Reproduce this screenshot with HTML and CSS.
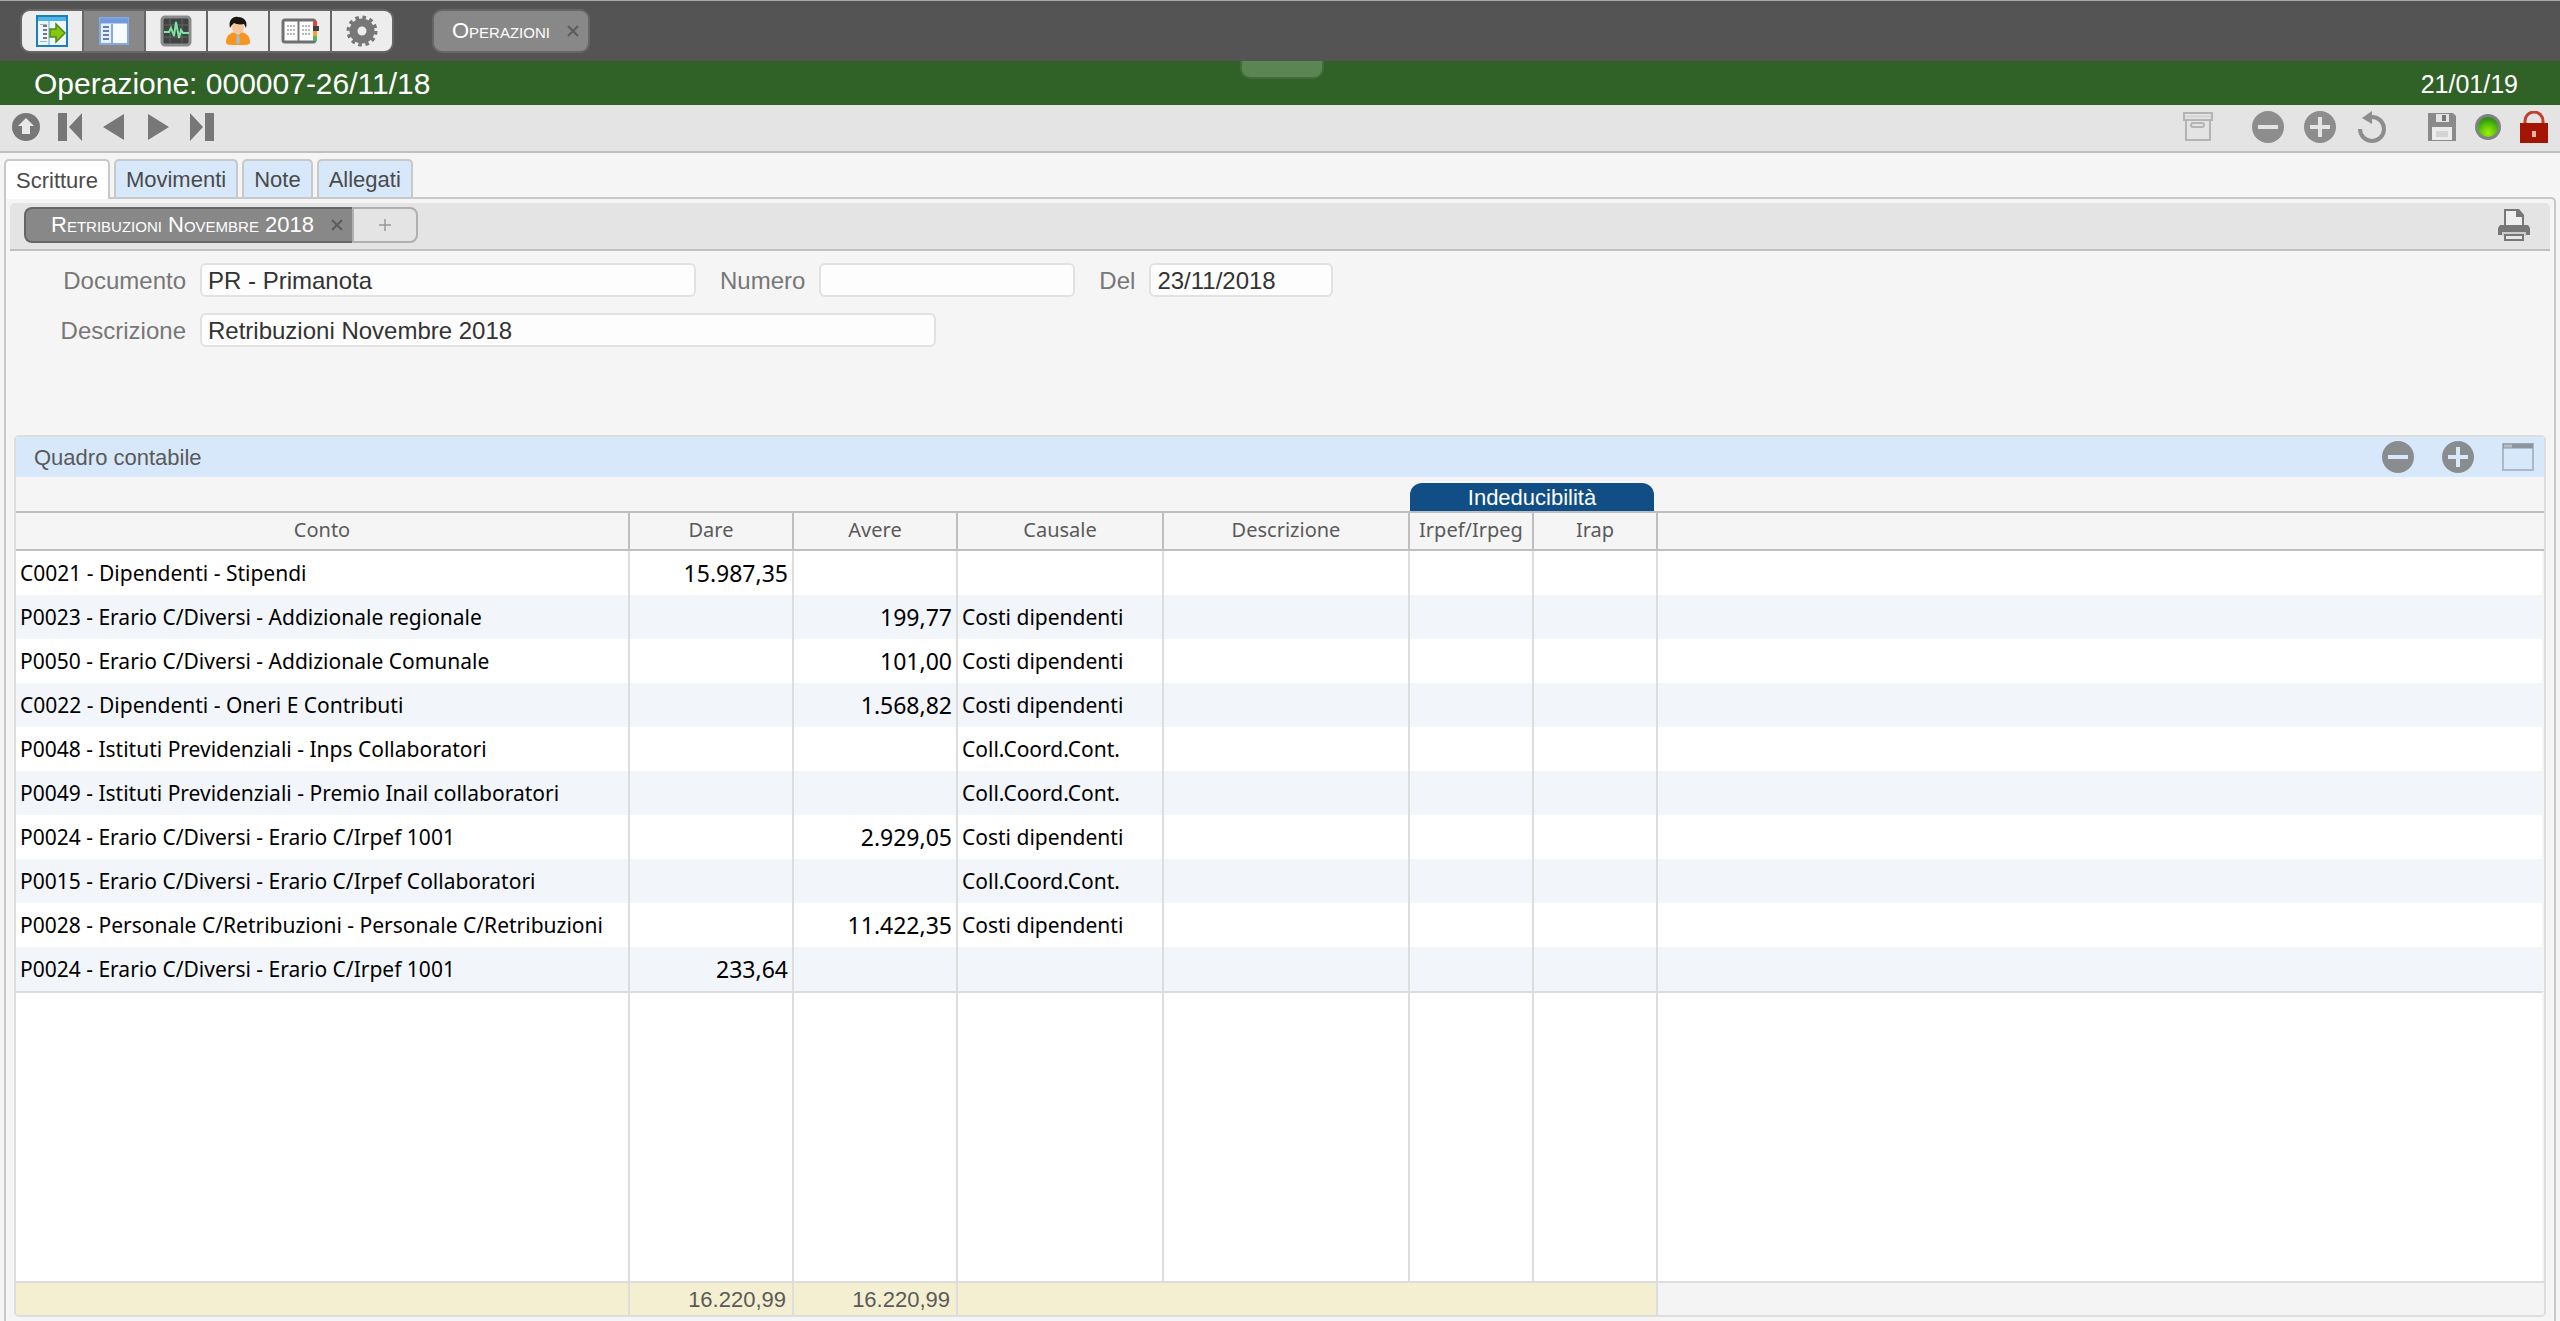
FILE: index.html
```html
<!DOCTYPE html>
<html lang="it">
<head>
  <meta charset="UTF-8">
  <meta name="viewport" content="width=device-width, initial-scale=1.0">
  <title>Operazioni</title>
  <link rel="stylesheet" href="styles.css">
</head>
<body>
  <header class="topbar">
    <div class="apps">
      <button class="app" aria-label="Apri">
        <svg width="32" height="32" viewBox="0 0 32 32">
          <rect x="1" y="1" width="30" height="30" fill="#eef6fb" stroke="#1b7fb8" stroke-width="2"/>
          <path d="M2 4h28" stroke="#4fb4e6" stroke-width="4"/>
          <path d="M13 6v24" stroke="#5bb3de" stroke-width="1"/>
          <path d="M4 9.500h7M4 26.500h7" stroke="#9fb6c4" stroke-width="1"/>
          <path d="M7 11h4M7 15h4M7 19h4M7 23h4" stroke="#777" stroke-width="2"/>
          <path d="M14 14h6V9l9 9-9 9v-5h-6z" fill="#86c716" stroke="#4f8a10" stroke-width="1.500"/>
        </svg>
      </button>
      <button class="app active" aria-label="Elenco">
        <svg width="30" height="28" viewBox="0 0 30 28">
          <rect x="1" y="1" width="28" height="26" fill="#f7faff" stroke="#86a9e0" stroke-width="2"/>
          <path d="M1 4h28" stroke="#6f9ade" stroke-width="5"/>
          <rect x="2" y="7" width="10" height="19" fill="#e6effc"/>
          <path d="M4 10h6M4 14h6M4 18h6M4 22h6" stroke="#5f7fb8" stroke-width="2"/>
          <path d="M13 7v19" stroke="#86a9e0" stroke-width="2"/>
        </svg>
      </button>
      <button class="app" aria-label="Monitor">
        <svg width="32" height="32" viewBox="0 0 32 32">
          <rect x="2" y="2" width="28" height="28" rx="3" fill="#3f4442" stroke="#8b8b8b" stroke-width="3"/>
          <path d="M4 10h24M4 22h24M10 4v24M22 4v24" stroke="#5f6864" stroke-width="1"/>
          <path d="M4 17h5l2-4 3 8 2-14 3 16 2-8 2 3h6" fill="none" stroke="#7ee2a0" stroke-width="2"/>
        </svg>
      </button>
      <button class="app" aria-label="Utente">
        <svg width="28" height="30" viewBox="0 0 28 30">
          <path d="M2 26c0-7 5-10 12-10s12 3 12 10c0 3-3 3-12 3s-12 0-12-3z" fill="#f9941e"/>
          <path d="M11 16h6l-3 4z" fill="#fff"/>
          <path d="M13 18h2l1 8-2 3-2-3z" fill="#a9bccb"/>
          <ellipse cx="14" cy="11" rx="6" ry="7" fill="#f6c79b"/>
          <path d="M6 12C4 4 9 0 14 1c6 0 10 4 8 11l-2-4c-4 1-8 0-10-1l-2 2z" fill="#1b1512"/>
        </svg>
      </button>
      <button class="app" aria-label="Rubrica">
        <svg width="38" height="26" viewBox="0 0 38 26">
          <rect x="2" y="2" width="32" height="22" rx="2" fill="#fcfcfc" stroke="#707070" stroke-width="3"/>
          <path d="M17.500 3v20" stroke="#777" stroke-width="2"/>
          <path d="M6 8h8M6 12h8M6 16h8M21 8h8M21 12h8M21 16h8" stroke="#b8b8b8" stroke-width="2" stroke-dasharray="2 1"/>
          <path d="M32 3h4v5h-4z" fill="#e2453c"/>
          <path d="M32 8h6v5h-6z" fill="#3f3f3f"/>
          <path d="M32 13h4v5h-4z" fill="#f0a43a"/>
          <path d="M32 18h4v5h-4z" fill="#57b365"/>
        </svg>
      </button>
      <button class="app" aria-label="Impostazioni">
        <svg width="32" height="32" viewBox="0 0 32 32">
          <circle cx="16" cy="16" r="8.500" fill="none" stroke="#777" stroke-width="8"/>
          <circle cx="16" cy="16" r="13.500" fill="none" stroke="#777" stroke-width="4" stroke-dasharray="3.534 3.534"/>
        </svg>
      </button>
    </div>
    <div class="task">
      <span>Operazioni</span>
      <button class="close" aria-label="Chiudi">
        <svg width="14" height="14" viewBox="0 0 14 14"><path d="M2 2l10 10M12 2L2 12" stroke="#5c5c5c" stroke-width="2"/></svg>
      </button>
    </div>
  </header>

  <div class="titlebar">
    <h1>Operazione: 000007-26/11/18</h1>
    <span class="date">21/01/19</span>
    <div class="handle"></div>
  </div>

  <div class="toolbar">
    <div class="nav">
      <button aria-label="Su">
        <svg width="30" height="30" viewBox="0 0 30 30"><circle cx="15" cy="15" r="14" fill="#777"/><path d="M15 6l8 8h-4v8h-8v-8H7z" fill="#e8e8e8"/></svg>
      </button>
      <button aria-label="Primo">
        <svg width="26" height="28" viewBox="0 0 26 28"><path d="M1 0h9v28H1zM25 0v28L12 14z" fill="#777"/></svg>
      </button>
      <button aria-label="Precedente">
        <svg width="22" height="28" viewBox="0 0 22 28"><path d="M21 1v26L0 14z" fill="#777"/></svg>
      </button>
      <button aria-label="Successivo">
        <svg width="22" height="28" viewBox="0 0 22 28"><path d="M1 1v26l21-13z" fill="#777"/></svg>
      </button>
      <button aria-label="Ultimo">
        <svg width="26" height="28" viewBox="0 0 26 28"><path d="M16 0h9v28h-9zM1 0v28l13-14z" fill="#777"/></svg>
      </button>
    </div>
    <div class="actions">
      <div class="group">
        <button aria-label="Archivia">
          <svg width="30" height="30" viewBox="0 0 30 30" fill="none" stroke="#b4b4b4" stroke-width="2"><path d="M1 1h28v7H1zM3 8v20h24V8"/><path d="M2 4.500h26" stroke="#d4d4d4"/><rect x="8" y="11" width="13" height="4" rx="2"/></svg>
        </button>
      </div>
      <div class="group wide">
        <button aria-label="Rimuovi">
          <svg width="32" height="32" viewBox="0 0 32 32"><circle cx="16" cy="16" r="16" fill="#8d8d8d"/><path d="M6 16h20" stroke="#e4e4e4" stroke-width="4"/></svg>
        </button>
        <button aria-label="Aggiungi">
          <svg width="32" height="32" viewBox="0 0 32 32"><circle cx="16" cy="16" r="16" fill="#8d8d8d"/><path d="M6 16h20M16 6v20" stroke="#e4e4e4" stroke-width="4"/></svg>
        </button>
        <button aria-label="Annulla">
          <svg width="32" height="32" viewBox="0 0 32 32"><path d="M4 18a12 12 0 1 0 12-12" fill="none" stroke="#8d8d8d" stroke-width="4"/><path d="M16 0v13L6 7z" fill="#8d8d8d"/></svg>
        </button>
      </div>
      <div class="group">
        <button aria-label="Salva">
          <svg width="28" height="28" viewBox="0 0 28 28"><path d="M0 0h25l3 3v25H0z" fill="#8a8a8a"/><path d="M8 1h13v8H8z" fill="#e4e4e4"/><path d="M14 2h4v6h-4z" fill="#777"/><path d="M4 14h20v13H4z" fill="#ececec"/><path d="M8 18h12v6H8z" fill="#d4d4d4"/></svg>
        </button>
        <button aria-label="Stato">
          <svg width="28" height="28" viewBox="0 0 28 28">
            <defs><radialGradient id="led" cx="50%" cy="80%" r="75%"><stop offset="0" stop-color="#a4f000"/><stop offset="0.500" stop-color="#5fc80a"/><stop offset="1" stop-color="#2f8d16"/></radialGradient></defs>
            <circle cx="14" cy="14" r="13" fill="#7f837f"/><circle cx="14" cy="14" r="10" fill="url(#led)"/>
          </svg>
        </button>
        <button aria-label="Blocca">
          <svg width="28" height="32" viewBox="0 0 28 32"><path d="M5 13v-3a9 9 0 0 1 18 0v3" fill="none" stroke="#c2402f" stroke-width="3"/><path d="M0 12h28v20H0z" fill="#a31500"/><path d="M12 20h4v6h-4z" fill="#e6b3aa"/></svg>
        </button>
      </div>
    </div>
  </div>

  <nav class="tabs">
    <button class="tab active">Scritture</button>
    <button class="tab">Movimenti</button>
    <button class="tab">Note</button>
    <button class="tab">Allegati</button>
  </nav>

  <main class="panel">
    <div class="subbar">
      <div class="subtab">
        <span>Retribuzioni Novembre 2018</span>
        <button class="close" aria-label="Chiudi">
          <svg width="14" height="14" viewBox="0 0 14 14"><path d="M2 2l10 10M12 2L2 12" stroke="#5c5c5c" stroke-width="2"/></svg>
        </button>
      </div>
      <button class="add" aria-label="Nuova scrittura">
        <svg width="12" height="12" viewBox="0 0 12 12"><path d="M0 6h12M6 0v12" stroke="#999" stroke-width="1.500"/></svg>
      </button>
      <button class="print" aria-label="Stampa">
        <svg width="32" height="32" viewBox="0 0 32 32">
          <path d="M7 17V1h13l5 6v10" fill="#eee" stroke="#777" stroke-width="2"/>
          <path d="M18 0h3l5 6v2h-8z" fill="#777"/>
          <path d="M2 16h28l2 3v7h-4l-2-3H6l-2 3H0v-7z" fill="#777"/>
          <path d="M4 23h24v4H4z" fill="#ccc"/>
          <path d="M7 26h18v5H7z" fill="#e8e8e8" stroke="#777" stroke-width="2"/>
        </svg>
      </button>
    </div>

    <form class="fields">
      <div class="row">
        <label class="first" for="documento">Documento</label>
        <input class="w-doc" type="text" id="documento" value="PR - Primanota">
        <label for="numero">Numero</label>
        <input class="w-num" type="text" id="numero">
        <label for="del">Del</label>
        <input class="w-date" type="text" id="del" value="23/11/2018">
      </div>
      <div class="row">
        <label class="first" for="descrizione">Descrizione</label>
        <input class="w-desc" type="text" id="descrizione" value="Retribuzioni Novembre 2018">
      </div>
    </form>

    <section class="box">
      <div class="box-head">
        <h2>Quadro contabile</h2>
        <button aria-label="Rimuovi riga">
          <svg width="32" height="32" viewBox="0 0 32 32"><circle cx="16" cy="16" r="16" fill="#8a8d90"/><path d="M6 16h20" stroke="#d7e8fa" stroke-width="4"/></svg>
        </button>
        <button aria-label="Aggiungi riga">
          <svg width="32" height="32" viewBox="0 0 32 32"><circle cx="16" cy="16" r="16" fill="#8a8d90"/><path d="M6 16h20M16 6v20" stroke="#d7e8fa" stroke-width="4"/></svg>
        </button>
        <button aria-label="Ingrandisci">
          <svg width="32" height="28" viewBox="0 0 32 28"><rect x="1" y="1" width="30" height="26" fill="none" stroke="#abb8c6" stroke-width="2"/><path d="M1 3h30" stroke="#8d959e" stroke-width="5"/><path d="M2 3h8" stroke="#b4bfcb" stroke-width="3"/></svg>
        </button>
      </div>
      <div class="grid">
        <table>
          <colgroup>
            <col class="c-conto"><col class="c-amount"><col class="c-amount"><col class="c-causale"><col class="c-descr"><col class="c-tax"><col class="c-tax"><col>
          </colgroup>
          <thead>
            <tr class="groups">
              <th colspan="5"></th>
              <th colspan="2"><div class="pill">Indeducibilità</div></th>
              <th></th>
            </tr>
            <tr class="heads">
              <th>Conto</th><th>Dare</th><th>Avere</th><th>Causale</th><th>Descrizione</th><th>Irpef/Irpeg</th><th>Irap</th><th></th>
            </tr>
          </thead>
          <tbody>
            <tr><td>C0021 - Dipendenti - Stipendi</td><td class="num">15.987,35</td><td class="num"></td><td></td><td></td><td></td><td></td><td></td></tr>
            <tr><td>P0023 - Erario C/Diversi - Addizionale regionale</td><td class="num"></td><td class="num">199,77</td><td>Costi dipendenti</td><td></td><td></td><td></td><td></td></tr>
            <tr><td>P0050 - Erario C/Diversi - Addizionale Comunale</td><td class="num"></td><td class="num">101,00</td><td>Costi dipendenti</td><td></td><td></td><td></td><td></td></tr>
            <tr><td>C0022 - Dipendenti - Oneri E Contributi</td><td class="num"></td><td class="num">1.568,82</td><td>Costi dipendenti</td><td></td><td></td><td></td><td></td></tr>
            <tr><td>P0048 - Istituti Previdenziali - Inps Collaboratori</td><td class="num"></td><td class="num"></td><td>Coll.Coord.Cont.</td><td></td><td></td><td></td><td></td></tr>
            <tr><td>P0049 - Istituti Previdenziali - Premio Inail collaboratori</td><td class="num"></td><td class="num"></td><td>Coll.Coord.Cont.</td><td></td><td></td><td></td><td></td></tr>
            <tr><td>P0024 - Erario C/Diversi - Erario C/Irpef 1001</td><td class="num"></td><td class="num">2.929,05</td><td>Costi dipendenti</td><td></td><td></td><td></td><td></td></tr>
            <tr><td>P0015 - Erario C/Diversi - Erario C/Irpef Collaboratori</td><td class="num"></td><td class="num"></td><td>Coll.Coord.Cont.</td><td></td><td></td><td></td><td></td></tr>
            <tr><td>P0028 - Personale C/Retribuzioni - Personale C/Retribuzioni</td><td class="num"></td><td class="num">11.422,35</td><td>Costi dipendenti</td><td></td><td></td><td></td><td></td></tr>
            <tr><td>P0024 - Erario C/Diversi - Erario C/Irpef 1001</td><td class="num">233,64</td><td class="num"></td><td></td><td></td><td></td><td></td><td></td></tr>
            <tr class="filler"><td></td><td></td><td></td><td></td><td></td><td></td><td></td><td></td></tr>
          </tbody>
          <tfoot>
            <tr><td></td><td>16.220,99</td><td>16.220,99</td><td colspan="4"></td><td class="rest"></td></tr>
          </tfoot>
        </table>
      </div>
    </section>
  </main>
</body>
</html>
```
FILE: styles.css
```css
* {
  box-sizing: border-box;
}
body {
  margin: 0;
  height: 100vh;
  display: flex;
  flex-direction: column;
  overflow: hidden;
  background-color: #f5f5f5;
  color: #4a4a4a;
  font-family: "Liberation Sans", Arial, sans-serif;
  font-size: 22px;
}
button {
  margin: 0;
  padding: 0;
  border: none;
  background: none;
  font: inherit;
  color: inherit;
  cursor: pointer;
}
svg {
  display: block;
}

/* top bar */
.topbar {
  display: flex;
  align-items: center;
  gap: 38px;
  height: 61px;
  padding: 0 20px;
  background-color: #545454;
  border-top: 1px solid #a8aaa8;
}
.apps {
  display: flex;
  gap: 2px;
  padding: 2px;
  background-color: #666;
  border-radius: 10px;
  overflow: hidden;
}
.app {
  display: flex;
  align-items: center;
  justify-content: center;
  width: 60px;
  height: 40px;
  background-color: #ededed;
}
.app.active {
  background-color: #888;
}
.app:first-child {
  border-radius: 8px 0 0 8px;
}
.app:last-child {
  border-radius: 0 8px 8px 0;
}
.task, .subtab {
  display: flex;
  align-items: center;
  gap: 16px;
  background-color: #888;
  color: white;
  font-variant: small-caps;
}
.task {
  height: 44px;
  padding: 0 8px 0 18px;
  border: 2px solid #666;
  border-radius: 10px;
}

/* title */
.titlebar {
  position: relative;
  display: flex;
  align-items: center;
  justify-content: space-between;
  height: 44px;
  padding: 2px 42px 0 34px;
  background-color: #306227;
  color: white;
}
.titlebar h1 {
  margin: 0;
  font-size: 30px;
  font-weight: normal;
}
.date {
  font-size: 25px;
}
.handle {
  position: absolute;
  top: 0;
  left: 50%;
  width: 84px;
  height: 18px;
  margin-left: -40px;
  background-color: #5b8553;
  border: 2px solid #3f6c39;
  border-top: none;
  border-radius: 0 0 10px 10px;
}

/* toolbar */
.toolbar {
  display: flex;
  justify-content: space-between;
  height: 48px;
  padding: 0 10px 2px 4px;
  background-color: #e4e4e4;
  border-bottom: 2px solid #c0c0c0;
}
.nav, .actions, .group {
  display: flex;
  align-items: center;
}
.nav button, .group button {
  display: flex;
  justify-content: center;
  width: 44px;
}
.actions {
  gap: 38px;
}
.group {
  gap: 14px;
}
.group.wide {
  gap: 20px;
}
.group button {
  width: 32px;
}

/* tabs */
.tabs {
  display: flex;
  gap: 4px;
  padding: 6px 4px 0;
}
.tab {
  height: 38px;
  padding: 2px 10px 0;
  background-color: #d7e8fa;
  border: 2px solid #c8c8c8;
  border-bottom: none;
  border-radius: 5px 5px 0 0;
}
.tab.active {
  position: relative;
  height: 40px;
  margin-bottom: -2px;
  background-color: white;
}
.panel {
  flex: 1;
  display: flex;
  flex-direction: column;
  margin: 0 4px;
  padding: 4px;
  border: 2px solid #c8c8c8;
  border-bottom: none;
  border-top-right-radius: 5px;
}
.subbar {
  display: flex;
  align-items: center;
  height: 48px;
  padding: 0 20px 2px 14px;
  background-color: #e4e4e4;
  border-bottom: 2px solid #c0c0c0;
  border-radius: 5px 5px 0 0;
}
.subtab {
  height: 36px;
  padding: 0 8px 0 25px;
  border: 2px solid #666;
  border-right: none;
  border-radius: 8px 0 0 8px;
}
.add {
  display: flex;
  align-items: center;
  justify-content: center;
  width: 66px;
  height: 36px;
  border: 2px solid #b0b0b0;
  border-radius: 0 8px 8px 0;
}
.print {
  margin-left: auto;
}

/* fields */
.fields {
  display: flex;
  flex-direction: column;
  gap: 16px;
  margin: 12px 0 88px;
  font-size: 24px;
}
.row {
  display: flex;
  align-items: center;
}
.row label {
  margin-right: 14px;
  padding-top: 2px;
  color: #777;
}
.row .first {
  width: 176px;
  text-align: right;
}
.row input {
  height: 34px;
  margin: 0 24px 0 0;
  padding: 2px 6px 0;
  border: 2px solid #e2e2e2;
  border-radius: 6px;
  background-color: #fdfdfd;
  color: #333;
  font: inherit;
}
.w-doc {
  width: 496px;
}
.w-num {
  width: 256px;
}
.w-date {
  width: 184px;
}
.w-desc {
  width: 736px;
}

/* account grid */
.box {
  flex: 1;
  display: flex;
  flex-direction: column;
  margin: 0 4px;
  border: 2px solid #ddd;
  border-radius: 5px;
  overflow: hidden;
}
.box-head {
  display: flex;
  align-items: center;
  gap: 28px;
  height: 40px;
  padding: 0 10px 0 18px;
  background-color: #d7e8fa;
}
.box-head h2 {
  flex: 1;
  margin: 0;
  padding-top: 2px;
  font-size: 22px;
  font-weight: normal;
  color: #5a5a5a;
}
.grid {
  flex: 1;
  display: flex;
}
table {
  width: 100%;
  table-layout: fixed;
  border-spacing: 0;
  font-family: "Noto Sans", sans-serif;
  font-size: 21px;
  line-height: 28px;
}
.c-conto {
  width: 614px;
}
.c-amount {
  width: 164px;
}
.c-causale {
  width: 206px;
}
.c-descr {
  width: 246px;
}
.c-tax {
  width: 124px;
}
th, td {
  padding: 0 4px;
  text-align: left;
  white-space: nowrap;
}
th {
  padding: 0;
  border-bottom: 2px solid #bfbfbf;
  font-weight: normal;
  text-align: center;
  color: #5a5a5a;
}
.groups th {
  height: 36px;
  vertical-align: bottom;
}
.pill {
  height: 28px;
  margin-right: 4px;
  padding-top: 2px;
  background-color: #114e85;
  border-radius: 12px 12px 0 0;
  color: white;
  font: 22px/26px "Liberation Sans", Arial, sans-serif;
}
.heads th {
  height: 38px;
  padding-bottom: 2px;
  border-right: 2px solid #bfbfbf;
  font-size: 20px;
}
.heads th:last-child {
  border-right: none;
}
tbody td {
  height: 44px;
  border-right: 2px solid #ddd;
  background-color: white;
  color: #000;
}
tbody tr:nth-child(even) td {
  background-color: #f2f6fb;
}
tbody td:last-child {
  border-right-color: #f5f5f5;
}
.num {
  font-size: 23px;
  text-align: right;
}
.filler td {
  height: auto;
  border-top: 2px solid #ddd;
}
tfoot td {
  height: 34px;
  padding: 2px 6px 0;
  border-top: 2px solid #ddd;
  border-right: 2px solid #ddd;
  background-color: #f5efd2;
  color: #5a5a5a;
  font-family: "Liberation Sans", Arial, sans-serif;
  font-size: 22px;
  text-align: right;
}
tfoot .rest {
  border-right: none;
  background-color: #f4f4f4;
}
```
